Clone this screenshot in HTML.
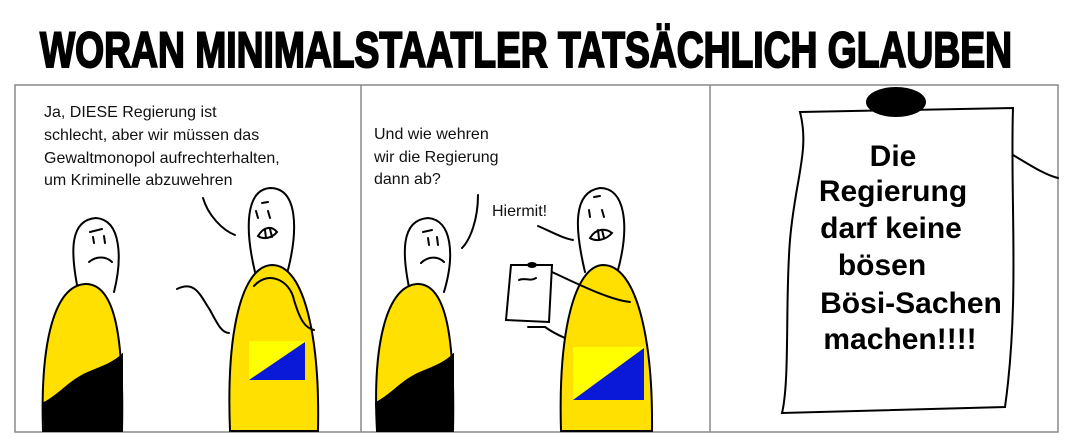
<!DOCTYPE html>
<html><head><style>
html,body{margin:0;padding:0;background:#fff;width:1074px;height:447px;overflow:hidden}
svg{display:block}
text{font-family:"Liberation Sans",sans-serif}
</style></head><body>
<svg width="1074" height="447" viewBox="0 0 1074 447">
<rect width="1074" height="447" fill="#fff"/>
<text x="40" y="67" font-size="50" font-weight="bold" textLength="972" lengthAdjust="spacingAndGlyphs" fill="#000" stroke="#000" stroke-width="2">WORAN MINIMALSTAATLER TATSÄCHLICH GLAUBEN</text>
<g fill="none" stroke="#888" stroke-width="1.5">
<rect x="15" y="85" width="1043" height="347"/>
<line x1="361" y1="85" x2="361" y2="432"/>
<line x1="710" y1="85" x2="710" y2="432"/>
</g>
<g font-size="16" fill="#111">
<text x="44" y="117">Ja, DIESE Regierung ist</text>
<text x="44" y="140">schlecht, aber wir müssen das</text>
<text x="44" y="163">Gewaltmonopol aufrechterhalten,</text>
<text x="44" y="185">um Kriminelle abzuwehren</text>
<text x="374" y="139">Und wie wehren</text>
<text x="374" y="162">wir die Regierung</text>
<text x="374" y="184">dann ab?</text>
<text x="492" y="216">Hiermit!</text>
</g>
<g stroke="#000" stroke-width="2" fill="none" stroke-linecap="round">
<!-- panel1 left -->
<path d="M78 290 C70 250 70 220 96 218 C122 220 122 260 114 292"/>
<path d="M43 431 C40 340 55 286 85 284 C116 283 124 340 122 431 Z" fill="#ffe000"/>
<path d="M44 403 C60 395 70 380 90 372 C105 366 115 362 122 355 L122 431 L45 431 Z" fill="#000"/>
<path d="M90 232 L102 229 M93 237 L94 243 M104 236 L105 243 M89 262 C96 256 106 256 112 262"/>
<!-- panel1 right -->
<path d="M255 272 C245 230 245 190 270 188 C298 188 298 230 288 270"/>
<path d="M230 431 C226 330 242 266 272 265 C305 265 320 340 318 431 Z" fill="#ffe000"/>
<path d="M254 286 C268 270 290 280 294 300 C300 320 305 328 314 330"/>
<path d="M262 203 L268 202 M256 211 L258 218 M268 211 L270 218 M258 236 C264 226 272 226 277 232 C272 238 264 240 258 236 Z M265 230 L266 238 M270 229 L272 237"/>
<path d="M177 289 C195 280 200 295 210 310 C218 325 222 333 229 333"/>
<path d="M203 198 C208 215 222 230 235 235"/>
<!-- panel2 left -->
<path d="M410 292 C402 255 400 220 428 218 C452 220 455 255 444 292"/>
<path d="M377 431 C372 340 388 286 417 284 C447 283 455 340 453 431 Z" fill="#ffe000"/>
<path d="M376 403 C392 395 402 380 422 372 C437 366 446 362 453 355 L453 431 L378 431 Z" fill="#000"/>
<path d="M423 232 L432 230 M428 238 L429 245 M437 237 L438 245 M421 263 C428 256 438 256 444 262"/>
<path d="M478 195 C478 220 470 240 462 248"/>
<!-- panel2 right -->
<path d="M585 272 C575 230 572 192 600 188 C625 188 630 225 618 270"/>
<path d="M561 431 C558 330 575 266 603 265 C637 265 653 340 652 431 Z" fill="#ffe000"/>
<path d="M594 197 L600 196 M589 210 L590 217 M602 210 L604 217 M590 238 C596 228 606 228 612 233 C606 240 596 242 590 238 Z M598 230 L599 239 M602 230 L604 238"/>
<path d="M538 226 C552 232 562 238 573 240"/>
<path d="M552 272 C580 285 610 300 630 302"/>
<path d="M528 327 L545 327 C552 332 558 335 565 338"/>
<path d="M511 265 L552 265 L549 322 L506 320 Z" fill="#fff"/>
<path d="M519 280 C524 277 530 282 536 278"/>
<!-- panel3 paper -->
<path d="M800 112 L1013 108 C1010 200 1020 300 1005 407 L782 413 C790 380 785 300 790 240 C795 180 810 150 800 112 Z" fill="#fff"/>
<path d="M1013 155 C1030 165 1045 175 1058 178"/>
</g>
<ellipse cx="532" cy="265" rx="5" ry="3" fill="#000"/>
<ellipse cx="896" cy="102" rx="30" ry="15" fill="#000"/>
<g>
<rect x="249" y="341" width="56" height="39" fill="#ffff00"/>
<polygon points="249,380 305,342 305,380" fill="#0a18d8"/>
<rect x="573" y="347" width="71" height="53" fill="#ffff00"/>
<polygon points="573,400 644,348 644,400" fill="#0a18d8"/>
</g>
<g font-size="30" font-weight="bold" fill="#000" text-anchor="middle">
<text x="893" y="166">Die</text>
<text x="893" y="201">Regierung</text>
<text x="891" y="238">darf keine</text>
<text x="882" y="275">bösen</text>
<text x="911" y="313">Bösi-Sachen</text>
<text x="900" y="349">machen!!!!</text>
</g>
</svg>
</body></html>
